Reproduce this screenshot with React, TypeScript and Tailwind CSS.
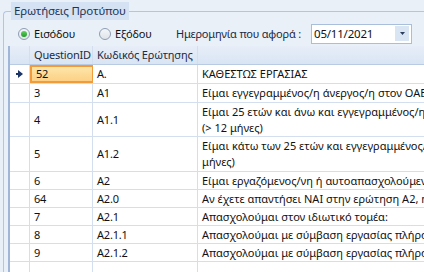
import type { ReactNode } from "react";

type Row = {
  id: string;
  code: string;
  text: string[];
  h: string;
  focused?: boolean;
};

const rows: Row[] = [
  { id: "52", code: "A.", text: ["ΚΑΘΕΣΤΩΣ ΕΡΓΑΣΙΑΣ"], h: "h-[19px]", focused: true },
  { id: "3", code: "A1", text: ["Είμαι εγγεγραμμένος/η άνεργος/η στον ΟΑΕΔ"], h: "h-[19px]" },
  {
    id: "4",
    code: "A1.1",
    text: ["Είμαι 25 ετών και άνω και εγγεγραμμένος/η στον ΟΑΕΔ", "(> 12 μήνες)"],
    h: "h-[34px]",
  },
  {
    id: "5",
    code: "A1.2",
    text: ["Είμαι κάτω των 25 ετών και εγγεγραμμένος/η στον ΟΑΕΔ", "μήνες)"],
    h: "h-[35px]",
  },
  { id: "6", code: "A2", text: ["Είμαι εργαζόμενος/νη ή αυτοαπασχολούμενος/η"], h: "h-[18px]" },
  { id: "64", code: "A2.0", text: ["Αν έχετε απαντήσει ΝΑΙ στην ερώτηση Α2, η απάντηση"], h: "h-[18px]" },
  { id: "7", code: "A2.1", text: ["Απασχολούμαι στον ιδιωτικό τομέα:"], h: "h-[18px]" },
  { id: "8", code: "A2.1.1", text: ["Απασχολούμαι με σύμβαση εργασίας πλήρους απασχόλησης"], h: "h-[18px]" },
  { id: "9", code: "A2.1.2", text: ["Απασχολούμαι με σύμβαση εργασίας πλήρους απασχόλησης"], h: "h-[18px]" },
  { id: "", code: "", text: [""], h: "h-[18px]" },
];

const cols = "grid grid-cols-[20px_63px_105px_340px]";

function Radio({ checked, label }: { checked?: boolean; label: string }) {
  return (
    <label className="flex items-center gap-[4px]">
      <span className="flex h-[12px] w-[12px] items-center justify-center rounded-full border border-[#8e9db3] bg-gradient-to-b from-[#f4f6f9] to-[#dfe4ea]">
        {checked && (
          <span className="h-[6px] w-[6px] rounded-full bg-gradient-to-b from-[#5ed35e] to-[#1f9a2a]" />
        )}
      </span>
      <span>{label}</span>
    </label>
  );
}

function Cell({ children, className = "" }: { children?: ReactNode; className?: string }) {
  return (
    <div className={`overflow-hidden whitespace-nowrap border-r border-[#d3deee] px-[4px] ${className}`}>
      {children}
    </div>
  );
}

export default function App() {
  return (
    <div className="h-[272px] w-[424px] overflow-hidden bg-[#eaf0f8] font-['Noto_Sans',sans-serif] text-[11px] leading-[16px] tracking-[-0.2px] text-[#111]">
      <fieldset className="ml-[3px] mt-[2px] w-[500px] rounded-tl-[4px] border-l border-t border-[#b3c6e0]">
        <legend className="ml-[7px] h-[18px] bg-[#d5e2f3] px-[3px] text-[11.5px] leading-[18px] text-[#1d3557]">
          Ερωτήσεις Προτύπου
        </legend>

        <div className="flex h-[26px] items-center pl-[14px] pt-[1px]">
          <div className="w-[81px]">
            <Radio checked label="Εισόδου" />
          </div>
          <div className="w-[77px]">
            <Radio label="Εξόδου" />
          </div>
          <span className="w-[126px] whitespace-nowrap text-[#1b2a44]">Ημερομηνία που αφορά :</span>
          <div className="ml-[9px] flex h-[20px] w-[101px] items-center border border-[#a9bedb] bg-white pl-[2px] pr-[2px] text-[11.5px]">
            <span className="flex-1">05/11/2021</span>
            <span className="flex h-[15px] w-[14px] items-center justify-center bg-[#dae5f4]">
              <svg width="5" height="3" viewBox="0 0 5 3">
                <path d="M0 0h5L2.5 3z" fill="#2a3d5c" />
              </svg>
            </span>
          </div>
        </div>

        <div className="ml-[4px] border-l-2 border-[#9fb6d8] bg-white">
          <div className={`${cols} h-[19px] border-b border-[#b9cbe3] bg-gradient-to-b from-[#e7eef8] to-[#d9e5f4] leading-[18px] text-[#1e2b40]`}>
            <Cell className="border-[#c2d2e8]" />
            <Cell className="border-[#c2d2e8]">QuestionID</Cell>
            <Cell className="border-[#c2d2e8]">Κωδικός Ερώτησης</Cell>
            <Cell className="border-[#c2d2e8]" />
          </div>
          {rows.map((r, i) => (
            <div key={i} className={`${cols} ${r.h} border-b border-[#d3deee]`}>
              <Cell className="flex items-center justify-center">
                {r.focused && (
                  <svg width="7" height="8" viewBox="0 0 7 8">
                    <path d="M0 3h2v2H0z M2 0l5 4-5 4z" fill="#1b3566" />
                  </svg>
                )}
              </Cell>
              <Cell
                className={
                  r.focused
                    ? "flex items-center border-2 border-[#f29b3a] bg-gradient-to-b from-[#fde6aa] to-[#fcd184] px-[3px]"
                    : "flex items-center"
                }
              >
                {r.id}
              </Cell>
              <Cell className="flex items-center">{r.code}</Cell>
              <Cell className="flex flex-col justify-center tracking-normal">
                {r.text.map((t, j) => (
                  <span key={j}>{t}</span>
                ))}
              </Cell>
            </div>
          ))}
        </div>
      </fieldset>
    </div>
  );
}
